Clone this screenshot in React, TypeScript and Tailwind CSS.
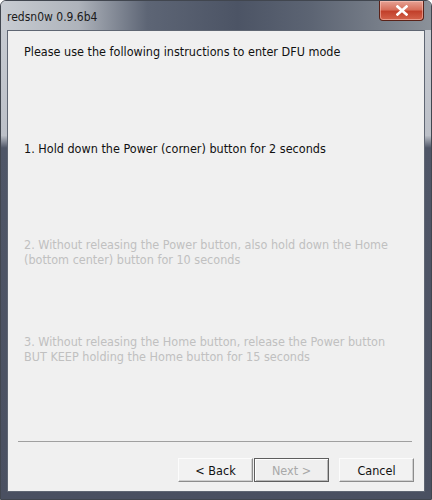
const font = "font-['DejaVu_Sans_Condensed','DejaVu_Sans','Liberation_Sans',sans-serif]";

function CloseButton() {
  return (
    <div className="ml-auto mr-[7px] flex h-[20px] w-[45px] items-center justify-center rounded-b-[4px] border border-t-0 border-[#5a2218] bg-[linear-gradient(to_bottom,#e6a294_0%,#d7705c_45%,#c2402b_55%,#d4634b_100%)] shadow-[inset_0_0_0_1px_rgba(255,210,200,0.5)]">
      <svg width="12" height="11" viewBox="0 0 12 11">
        <path d="M1.5 1.5 L10.5 9.5 M10.5 1.5 L1.5 9.5" stroke="#ffffff" strokeWidth="2.6" strokeLinecap="square" />
      </svg>
    </div>
  );
}

function WizButton({ label, disabled }: { label: string; disabled?: boolean }) {
  if (disabled) {
    return (
      <div className="flex h-[24px] w-[75px] items-center justify-center border border-[#5e5e5e] bg-[#efefef] shadow-[inset_1px_1px_0_#ffffff,inset_-1px_-1px_0_#b8b8b8] text-[12.5px] text-[#a8a8a8]">
        {label}
      </div>
    );
  }
  return (
    <div className="flex h-[24px] w-[75px] items-center justify-center border border-[#fcfcfc] border-r-[#8c8c8c] border-b-[#8c8c8c] bg-[#f2f2f2] shadow-[inset_-1px_-1px_0_#d0d0d0] text-[12.5px] text-[#111]">
      {label}
    </div>
  );
}

export default function App() {
  return (
    <div className={`${font} h-[500px] w-[432px] overflow-hidden`}>
      <div className="flex h-full w-full flex-col rounded-t-[6px] border border-[#41464f] bg-[linear-gradient(to_bottom,#c9cdd3_0%,#bcc0c8_27%,#4f5667_29.5%,#4a5061_100%)]">
        {/* title bar */}
        <div className="flex h-[29px] items-start rounded-t-[5px] bg-[linear-gradient(to_right,#c8ccd2_0%,#aeb3bb_18%,#5d6575_34%,#4c5465_55%,#5c6473_72%,#8b9199_100%)]">
          <span className="mt-[7px] ml-[6px] text-[12px] text-[#1a1a1a]">redsn0w 0.9.6b4</span>
          <CloseButton />
        </div>

        {/* client area */}
        <div className="mx-[6px] mb-[7px] flex flex-1 flex-col border border-[#5f6673] bg-[#f0f0f0] text-[12.5px] leading-[15px]">
          <div className="pl-[16px]">
            <p className="mt-[13px] text-[#111]">Please use the following instructions to enter DFU mode</p>
            <p className="mt-[82px] text-[#111]">1. Hold down the Power (corner) button for 2 seconds</p>
            <p className="mt-[81px] text-[#c0c0c0]">
              2. Without releasing the Power button, also hold down the Home
              <br />
              (bottom center) button for 10 seconds
            </p>
            <p className="mt-[67px] text-[#c0c0c0]">
              3. Without releasing the Home button, release the Power button
              <br />
              BUT KEEP holding the Home button for 15 seconds
            </p>
          </div>

          <div className="mt-auto">
            <div className="ml-[10px] mr-[12px] h-px bg-[#a0a0a0]" />
            <div className="mt-[16px] mb-[9px] flex items-center justify-end pr-[10px]">
              <WizButton label="< Back" />
              <div className="ml-[1px]">
                <WizButton label="Next >" disabled />
              </div>
              <div className="ml-[10px]">
                <WizButton label="Cancel" />
              </div>
            </div>
          </div>
        </div>
      </div>
    </div>
  );
}
